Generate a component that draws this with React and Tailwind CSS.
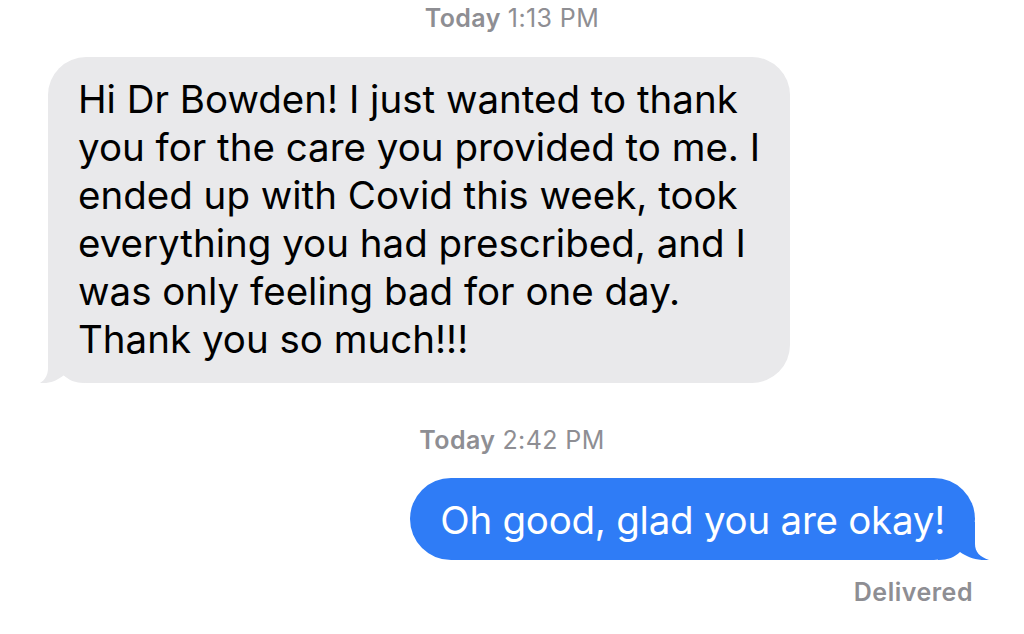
export default function App() {
  const font = { fontFamily: 'Inter, "Noto Sans", sans-serif' };
  return (
    <div className="w-[1024px] h-[634px] bg-white flex flex-col overflow-hidden" style={font}>
      <div className="h-[38px] flex items-center justify-center text-[25px] text-[#8e8e93] tracking-[0.4px]">
        <span className="font-semibold">Today</span>
        <span className="ml-[7px]">1:13 PM</span>
      </div>
      <div className="mt-[19px] pl-[48px] flex">
        <div className="relative w-[742px] bg-[#e9e9eb] rounded-[38px] pl-[30px] pr-[10px] pt-[18px] pb-[20px] text-[38.5px] leading-[48px] text-black">
          <svg className="absolute left-[-13px] bottom-0" width="50" height="38" viewBox="0 0 50 38">
            <path d="M13 0 L13 23 C13 30 10 35 5 38 C15 39 23 35 29 30 C33 35 40 38 50 38 L50 0 Z" fill="#e9e9eb" />
          </svg>
          <div className="relative">
            <div>Hi Dr Bowden! I just wanted to thank</div>
            <div>you for the care you provided to me. I</div>
            <div>ended up with Covid this week, took</div>
            <div>everything you had prescribed, and I</div>
            <div>was only feeling bad for one day.</div>
            <div>Thank you so much!!!</div>
          </div>
        </div>
      </div>
      <div className="mt-[39px] h-[38px] flex items-center justify-center text-[25px] text-[#8e8e93] tracking-[0.4px]">
        <span className="font-semibold">Today</span>
        <span className="ml-[7px]">2:42 PM</span>
      </div>
      <div className="mt-[18px] pr-[49px] flex justify-end">
        <div className="relative bg-[#2f7cf6] rounded-[41px] pl-[30px] pr-[30px] pt-[18px] pb-[16px] text-[38.5px] leading-[48px] text-white tracking-[-0.25px]">
          <svg className="absolute right-[-15px] bottom-0" width="52" height="38" viewBox="0 0 52 38">
            <path d="M37 0 L37 22 C37 30 42 35 51 38 C39 39 29 35 22 30 C17 35 10 38 0 38 L0 0 Z" fill="#2f7cf6" />
          </svg>
          <div className="relative whitespace-nowrap">Oh good, glad you are okay!</div>
        </div>
      </div>
      <div className="mt-[14px] pr-[51px] flex justify-end text-[25px] font-semibold text-[#8e8e93] tracking-[0.5px]">
        Delivered
      </div>
    </div>
  );
}
